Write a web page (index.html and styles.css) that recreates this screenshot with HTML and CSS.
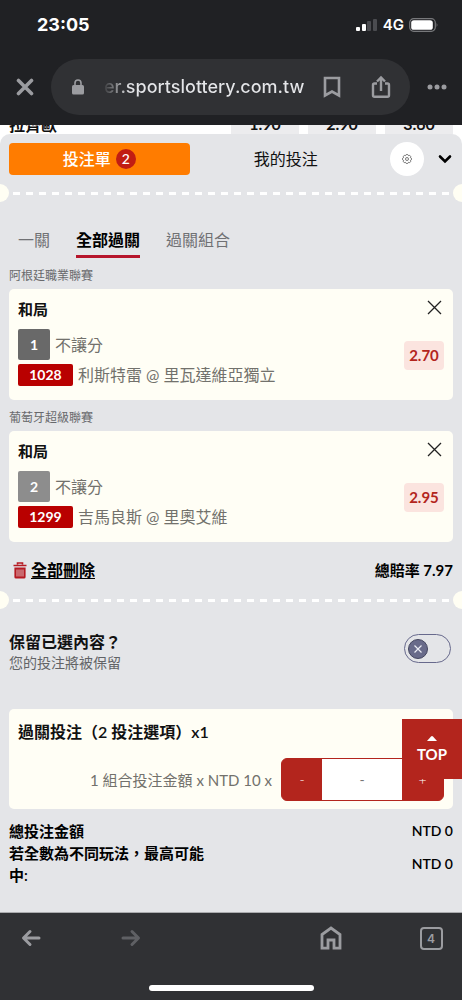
FILE: index.html
```html
<!DOCTYPE html>
<html lang="zh-Hant">
<head>
<meta charset="utf-8">
<meta name="viewport" content="width=device-width, initial-scale=1">
<title>投注單</title>
<link rel="stylesheet" href="styles.css">
</head>
<body>
<header class="browser-top">
  <div class="status">
    <span class="clock">23:05</span>
    <div class="status-right">
      <svg width="22" height="14" viewBox="0 0 22 14"><rect x="0" y="9" width="4" height="4" rx="1" fill="#fff"/><rect x="6" y="6" width="4" height="7" rx="1" fill="#fff"/><rect x="11" y="3" width="4" height="10" rx="1" fill="#4b4c50"/><rect x="17" y="1" width="4" height="12" rx="1" fill="#4b4c50"/></svg>
      <span class="network">4G</span>
      <svg width="30" height="14" viewBox="0 0 30 14"><rect x=".7" y=".7" width="25.6" height="12.6" rx="4" fill="none" stroke="#77787b" stroke-width="1.2"/><rect x="2.2" y="2.2" width="21.6" height="9.6" rx="2.6" fill="#fff"/><path d="M27.6 4.8q1.8 2.2 0 4.4z" fill="#77787b"/></svg>
    </div>
  </div>
  <div class="address-row">
    <button class="icon-btn" aria-label="關閉"><svg width="18" height="18" viewBox="0 0 18 18"><path d="M2.5 2.5l13 13M15.5 2.5l-13 13" stroke="#9b9ca0" stroke-width="3.6" stroke-linecap="round"/></svg></button>
    <div class="address">
      <svg class="lock" width="12" height="16" viewBox="0 0 12 16"><rect y="6" width="12" height="9.6" rx="1.6" fill="#9b9ca0"/><path d="M3 7V4a3 3 0 0 1 6 0v3" fill="none" stroke="#9b9ca0" stroke-width="1.6"/></svg>
      <span class="url">er.sportslottery.com.tw</span>
      <button class="icon-btn" aria-label="書籤"><svg width="18" height="22" viewBox="0 0 18 22"><path d="M2 2h14v17.5l-7-4-7 4z" fill="none" stroke="#9b9ca0" stroke-width="2.6"/></svg></button>
      <button class="icon-btn share" aria-label="分享"><svg width="20" height="24" viewBox="0 0 20 24"><path d="M6 8.500H3.500a1.500 1.500 0 0 0-1.500 1.500v10.200a1.500 1.500 0 0 0 1.500 1.500h13a1.500 1.500 0 0 0 1.500-1.500V10a1.500 1.500 0 0 0-1.500-1.500H14M10 16V3M6 6.500l4-4 4 4" fill="none" stroke="#9b9ca0" stroke-width="2.400"/></svg></button>
    </div>
    <button class="icon-btn" aria-label="更多"><svg width="20" height="6" viewBox="0 0 20 6"><g fill="#9b9ca0"><circle cx="3" cy="3" r="2.5"/><circle cx="10" cy="3" r="2.5"/><circle cx="17" cy="3" r="2.5"/></g></svg></button>
  </div>
</header>
<main class="page">
  <div class="behind"><span class="team">拉齊歐</span><span class="price">1.90</span><span class="price">2.90</span><span class="price">3.60</span></div>
  <section class="sheet">
    <div class="sheet-head">
      <button class="slip-tab active">投注單 <span class="count">2</span></button>
      <button class="slip-tab">我的投注</button>
      <button class="gear" aria-label="設定"><svg width="10" height="10" viewBox="0 0 20 20" fill="none" stroke="#444" stroke-width="1.4"><path d="M7.8 2.7L8.6 1h2.8l.8 1.7 1.4.6 1.8-.6 2 2-.7 1.8.6 1.4L19 8.600v2.800l-1.700.8-.6 1.400.6 1.800-2 2-1.800-.7-1.400.6-.8 1.700H8.600l-.8-1.700-1.400-.6-1.800.7-2-2 .7-1.800-.6-1.400L1 11.400V8.600l1.700-.8.6-1.400-.6-1.800 2-2 1.800.7z"/><circle cx="10" cy="10" r="3"/></svg></button>
      <button class="icon-btn collapse" aria-label="收合"><svg width="14" height="10" viewBox="0 0 14 10"><path d="M2 2.500l5 5 5-5" fill="none" stroke="#000" stroke-width="2.6" stroke-linecap="round"/></svg></button>
    </div>
    <div class="perforation"><i></i></div>
    <nav class="modes">
      <button>一關</button><button class="current">全部過關</button><button>過關組合</button>
    </nav>

    <h2 class="league">阿根廷職業聯賽</h2>
    <article class="card">
      <div class="pick">
        <h3>和局</h3>
        <p class="line market"><span class="index">1</span>不讓分</p>
        <p class="line"><span class="code">1028</span>利斯特雷 @ 里瓦達維亞獨立</p>
      </div>
      <div class="side">
        <button class="icon-btn remove" aria-label="移除"><svg width="15" height="15" viewBox="0 0 15 15"><path d="M1 1l13 13M14 1L1 14" stroke="#222" stroke-width="1.3"/></svg></button>
        <span class="odds">2.70</span>
      </div>
    </article>

    <h2 class="league">葡萄牙超級聯賽</h2>
    <article class="card">
      <div class="pick">
        <h3>和局</h3>
        <p class="line market"><span class="index light">2</span>不讓分</p>
        <p class="line"><span class="code">1299</span>吉馬良斯 @ 里奧艾維</p>
      </div>
      <div class="side">
        <button class="icon-btn remove" aria-label="移除"><svg width="15" height="15" viewBox="0 0 15 15"><path d="M1 1l13 13M14 1L1 14" stroke="#222" stroke-width="1.3"/></svg></button>
        <span class="odds">2.95</span>
      </div>
    </article>

    <div class="actions">
      <button class="clear"><svg width="14" height="17" viewBox="0 0 14 17"><path d="M4.500 2.500V1h5v1.500M.5 3.500h13" fill="none" stroke="#b51a22" stroke-width="1.600"/><path d="M1.400 5.600h11.200v9.400a1.600 1.600 0 0 1-1.600 1.600H3a1.600 1.600 0 0 1-1.600-1.600z" fill="#b51a22"/><path d="M4 7.500v7M6 7.500v7M8 7.500v7M10 7.500v7" stroke="#eadfe1" stroke-width=".8"/></svg><span>全部刪除</span></button>
      <span class="total-odds">總賠率 7.97</span>
    </div>
    <div class="perforation"><i></i></div>

    <div class="keep">
      <label for="keep"><strong>保留已選內容？</strong><small>您的投注將被保留</small></label>
      <span class="switch">
        <input type="checkbox" role="switch" id="keep">
        <svg class="knob" width="20" height="20" viewBox="0 0 20 20"><circle cx="10" cy="10" r="9.500" fill="#696b8a" stroke="#44465f"/><path d="M6.500 6.500l7 7M13.500 6.500l-7 7" stroke="#eceef5" stroke-width="1.200"/></svg>
      </span>
    </div>

    <div class="stake">
      <h3>過關投注（2 投注選項）x1</h3>
      <div class="stake-row">
        <label for="units">1 組合投注金額 x NTD 10 x</label>
        <div class="stepper"><button aria-label="減少">-</button><input id="units" type="text" inputmode="numeric" placeholder="-"><button aria-label="增加">+</button></div>
      </div>
      <a class="to-top" href="#"><svg width="10" height="5" viewBox="0 0 10 5"><path d="M0 5l4-4.500q1-.8 2 0L10 5z" fill="#fff"/></svg>TOP</a>
    </div>

    <dl class="totals">
      <div><dt>總投注金額</dt><dd>NTD 0</dd></div>
      <div><dt>若全數為不同玩法，最高可能中:</dt><dd>NTD 0</dd></div>
    </dl>
  </section>
</main>
<footer class="browser-bottom">
  <div class="toolbar">
    <button class="icon-btn" aria-label="上一頁"><svg width="20" height="18" viewBox="0 0 20 18"><path d="M18 9H3M9 2.500L2.500 9 9 15.500" fill="none" stroke="#9b9ca0" stroke-width="3" stroke-linecap="round" stroke-linejoin="round"/></svg></button>
    <button class="icon-btn" aria-label="下一頁"><svg width="20" height="18" viewBox="0 0 20 18"><path d="M2 9h15M11 2.500L17.500 9 11 15.500" fill="none" stroke="#5f6064" stroke-width="3" stroke-linecap="round" stroke-linejoin="round"/></svg></button>
    <span></span>
    <button class="icon-btn" aria-label="首頁"><svg width="22" height="24" viewBox="0 0 22 24"><path d="M2 22.200V8.500L11 2l9 6.500v13.700h-6V14H8v8.200z" fill="none" stroke="#9b9ca0" stroke-width="2.800"/></svg></button>
    <button class="tab-count" aria-label="4 個分頁">4</button>
  </div>
  <div class="home-bar"></div>
</footer>
</body>
</html>
```
FILE: styles.css
```css
* { box-sizing: border-box; }
body {
  margin: 0;
  min-height: 100vh;
  display: flex;
  flex-direction: column;
  background: #e4e5e8;
  color: #111;
  font: 16px/22px Lato, "Noto Sans CJK TC", sans-serif;
}
button, input { font: inherit; color: inherit; border: 0; padding: 0; margin: 0; background: none; }
h2, h3, p, dl, dd { margin: 0; }
h3 { font-size: 15px; font-weight: 600; line-height: 20px; }
svg { display: block; flex: none; }
.icon-btn { display: flex; align-items: center; justify-content: center; }

.browser-top { background: #202124; color: #fff; font-family: Inter, sans-serif; padding: 14px 0 10px; }
.status { display: flex; justify-content: space-between; padding: 0 23px 0 37px; height: 22px; align-items: center; }
.clock { font-size: 18px; font-weight: 700; }
.status-right { display: flex; align-items: center; gap: 5px; }
.network { font-size: 15px; font-weight: 600; }
.address-row { display: flex; align-items: center; gap: 17px; padding: 0 15px 0 16px; margin-top: 23px; }
.address {
  flex: 1; display: flex; align-items: center; height: 56px;
  padding: 0 19px 0 21px; border-radius: 28px; background: #303134;
}
.url {
  flex: 1; margin-left: 20px; font-size: 18px; font-weight: 500; white-space: nowrap;
  background: linear-gradient(90deg, #3a3b3e, #e4e5e8 26px); background-clip: text; -webkit-background-clip: text; color: transparent;
}
.share { margin-left: 30px; }

.page { flex: 1; display: flex; flex-direction: column; background: #fff; }
.behind { display: flex; align-items: flex-end; gap: 9px; height: 9px; padding: 0 9px; overflow: hidden; font-weight: 700; line-height: 19px; }
.team { flex: 1; }
.price { width: 68px; text-align: center; background: #ececee; line-height: 20px; }

.sheet { flex: 1; overflow: hidden; background: #e4e5e8; border-radius: 10px 10px 0 0; padding: 8px 9px 20px; }
.sheet-head { display: flex; align-items: center; height: 34px; }
.slip-tab { flex: 1; height: 32px; display: flex; align-items: center; justify-content: center; gap: 5px; }
.slip-tab.active { margin-right: 6px; background: #ff7c00; color: #fff; border-radius: 4px; font-weight: 500; }
.count { width: 20px; height: 20px; border-radius: 50%; background: #c11d13; font-size: 14px; line-height: 20px; }
.gear { width: 34px; height: 34px; margin: 0 14px; border-radius: 50%; background: #fff; display: flex; align-items: center; justify-content: center; }
.collapse { margin-right: 1px; }

.perforation { display: flex; align-items: center; margin: 8px -18px 0; }
.perforation::before, .perforation::after { content: ""; width: 18px; height: 18px; border-radius: 50%; background: #fffef3; }
.perforation i { flex: 1; height: 3px; margin: 0 4px; background: repeating-linear-gradient(90deg, #fff 0 7px, transparent 7px 13px); }

.modes { display: flex; gap: 26px; padding: 0 9px; margin-top: 26px; }
.modes button { height: 30px; padding-bottom: 4px; color: #707174; border-bottom: 3px solid transparent; }
.modes .current { color: #000; font-weight: 700; border-color: #b6152b; }
.league { margin: 7px 0 2px; font-size: 12px; font-weight: 400; line-height: 22px; color: #68696c; }

.card { display: flex; justify-content: space-between; padding: 10px 9px 14px; border-radius: 5px; background: #fffef5; }
.line { display: flex; align-items: center; gap: 5px; color: #72716c; }
.market { margin: 10px 0 4px; }
.index, .code { color: #fff; background: #b90000; border-radius: 2px; font-size: 14px; font-weight: 700; text-align: center; }
.index { width: 32px; line-height: 31px; background: #696969; }
.index.light { background: #8d8d8d; }
.code { width: 55px; line-height: 22px; }
.side { display: flex; flex-direction: column; align-items: flex-end; }
.remove { margin: 1px 2px 0 0; }
.odds { margin-top: 26px; width: 40px; border-radius: 4px; background: #fbe4df; color: #b3251d; font-size: 15px; font-weight: 700; line-height: 29px; text-align: center; }

.actions { display: flex; justify-content: space-between; align-items: center; margin-top: 17px; font-weight: 700; color: #000; }
.clear { display: flex; align-items: center; gap: 4px; margin-left: 4px; font-weight: 700; }
.clear span { text-decoration: underline; text-decoration-thickness: 1px; text-underline-offset: 2px; }
.total-odds { font-size: 15px; }
.actions + .perforation { margin-top: 10px; }

.keep { display: flex; justify-content: space-between; align-items: center; margin-top: 22px; }
.keep strong, .keep small { display: block; line-height: 21px; }
.keep strong { font-weight: 600; }
.keep small { font-size: 14px; color: #626366; }
.switch { position: relative; margin: 0 2px 8px 0; }
.switch input { appearance: none; display: block; width: 47px; height: 29px; border: 1px solid #67698c; border-radius: 15px; }
.knob { position: absolute; left: 4px; top: 5px; pointer-events: none; }

.stake { position: relative; margin-top: 36px; padding: 13px 9px 8px; border-radius: 5px; background: #fffef5; }
.stake h3 { font-size: 16px; }
.stake-row { display: flex; align-items: center; justify-content: flex-end; gap: 9px; margin-top: 16px; font-size: 15px; color: #72716c; }
.stepper { display: grid; grid-template-columns: 40px 80px 41px; height: 43px; border: 1px solid #b3251d; border-radius: 6px; background: #b3251d; overflow: hidden; font-size: 14px; }
.stepper button { color: #fff; font-weight: 300; }
.stepper input { width: 100%; background: #fff; text-align: center; }
.to-top {
  position: absolute; top: 10px; right: -9px; width: 60px; height: 60px;
  display: flex; flex-direction: column; align-items: center; justify-content: center; gap: 2px; padding-top: 2px;
  background: #b3251d; color: #fff; font-size: 15px; font-weight: 700; text-decoration: none;
}
.totals { margin-top: 11px; font-size: 15px; font-weight: 600; color: #000; }
.totals div { display: flex; align-items: center; justify-content: space-between; }
.totals dt { max-width: 204px; }
.totals dd { font-size: 14px; }

.browser-bottom { background: #303134; border-top: 1px solid #aaabae; }
.toolbar { display: grid; grid-template-columns: 1fr 1fr 1fr 1fr 1fr; justify-items: center; align-items: center; height: 50px; margin: 0 -19px; }
.tab-count { width: 23px; height: 23px; border: 2px solid #9b9ca0; border-radius: 4px; color: #9b9ca0; font: 600 12px/19px Inter, sans-serif; }
.home-bar { width: 165px; height: 6px; margin: 22px auto 9px; border-radius: 3px; background: #fff; }
```
